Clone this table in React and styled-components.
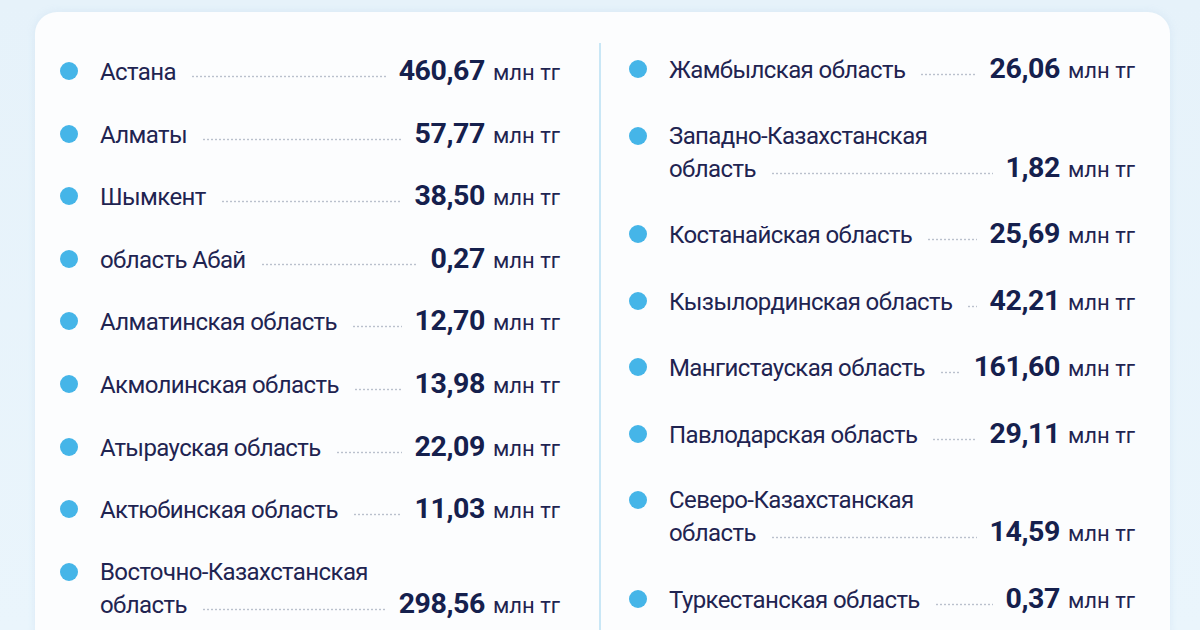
import React from "react";
import styled, { createGlobalStyle } from "styled-components";

const Global = createGlobalStyle`
  html, body { margin: 0; padding: 0; }
  body {
    background: linear-gradient(180deg, #e6f2fa 0%, #eaf5fc 100%);
    font-family: Roboto, "Noto Sans", sans-serif;
    width: 1200px;
    height: 630px;
    overflow: hidden;
  }
`;

const Page = styled.div`
  padding: 12px 30px 0 35px;
  height: 630px;
  box-sizing: border-box;
`;

const Card = styled.div`
  background: #fcfdfe;
  border-radius: 22px;
  box-shadow: 0 0 8px rgba(150, 190, 220, 0.18);
  height: 640px;
  box-sizing: border-box;
  padding: 31px 35px 0 25px;
  display: grid;
  grid-template-columns: 500px 1fr;
  column-gap: 39px;
`;

const Column = styled.div`
  display: flex;
  flex-direction: column;
  gap: ${(p) => p.$gap}px;
  padding-top: ${(p) => p.$top}px;
  ${(p) =>
    p.$divider &&
    `
    border-left: 2px solid #c9e7f6;
    padding-left: 28px;
  `}
`;

const Row = styled.div`
  display: flex;
  align-items: flex-start;
  gap: 22px;
`;

const Bullet = styled.span`
  flex: none;
  width: 18px;
  height: 18px;
  border-radius: 50%;
  background: #45b5e8;
  margin-top: 7px;
`;

const Body = styled.div`
  flex: 1;
  min-width: 0;
`;

const TextLine = styled.div`
  font-size: 24px;
  letter-spacing: -0.6px;
  height: 32px;
  line-height: 32px;
  color: #1f2451;
  white-space: nowrap;
`;

const Line = styled.div`
  display: flex;
  align-items: baseline;
  height: 32px;
  line-height: 32px;
`;

const Name = styled.span`
  font-size: 24px;
  letter-spacing: -0.6px;
  color: #1f2451;
  white-space: nowrap;
`;

const Leader = styled.span`
  flex: 1;
  height: 3px;
  margin: 0 13px 0 15px;
  background-image: radial-gradient(circle, #bac1cd 0.8px, transparent 1.2px);
  background-size: 4px 3px;
  background-repeat: repeat-x;
  background-position: left bottom;
  position: relative;
  top: -2px;
`;

const Value = styled.span`
  font-size: 28.5px;
  font-weight: 700;
  color: #15204d;
  letter-spacing: -0.4px;
`;

const Unit = styled.span`
  font-size: 22px;
  color: #1f2451;
  margin-left: 8px;
  white-space: nowrap;
`;

const left = [
  { name: ["Астана"], value: "460,67" },
  { name: ["Алматы"], value: "57,77" },
  { name: ["Шымкент"], value: "38,50" },
  { name: ["область Абай"], value: "0,27" },
  { name: ["Алматинская область"], value: "12,70" },
  { name: ["Акмолинская область"], value: "13,98" },
  { name: ["Атырауская область"], value: "22,09" },
  { name: ["Актюбинская область"], value: "11,03" },
  { name: ["Восточно-Казахстанская", "область"], value: "298,56" },
];

const right = [
  { name: ["Жамбылская область"], value: "26,06" },
  { name: ["Западно-Казахстанская", "область"], value: "1,82" },
  { name: ["Костанайская область"], value: "25,69" },
  { name: ["Кызылординская область"], value: "42,21" },
  { name: ["Мангистауская область"], value: "161,60" },
  { name: ["Павлодарская область"], value: "29,11" },
  { name: ["Северо-Казахстанская", "область"], value: "14,59" },
  { name: ["Туркестанская область"], value: "0,37" },
];

function Item({ name, value }) {
  const head = name.slice(0, -1);
  const last = name[name.length - 1];
  return (
    <Row>
      <Bullet />
      <Body>
        {head.map((t) => (
          <TextLine key={t}>{t}</TextLine>
        ))}
        <Line>
          <Name>{last}</Name>
          <Leader />
          <Value>{value}</Value>
          <Unit>млн тг</Unit>
        </Line>
      </Body>
    </Row>
  );
}

export default function App() {
  return (
    <>
      <Global />
      <Page>
        <Card>
          <Column $gap={30.6} $top={12}>
            {left.map((r) => (
              <Item key={r.value} {...r} />
            ))}
          </Column>
          <Column $gap={34.5} $top={10} $divider>
            {right.map((r) => (
              <Item key={r.value} {...r} />
            ))}
          </Column>
        </Card>
      </Page>
    </>
  );
}
